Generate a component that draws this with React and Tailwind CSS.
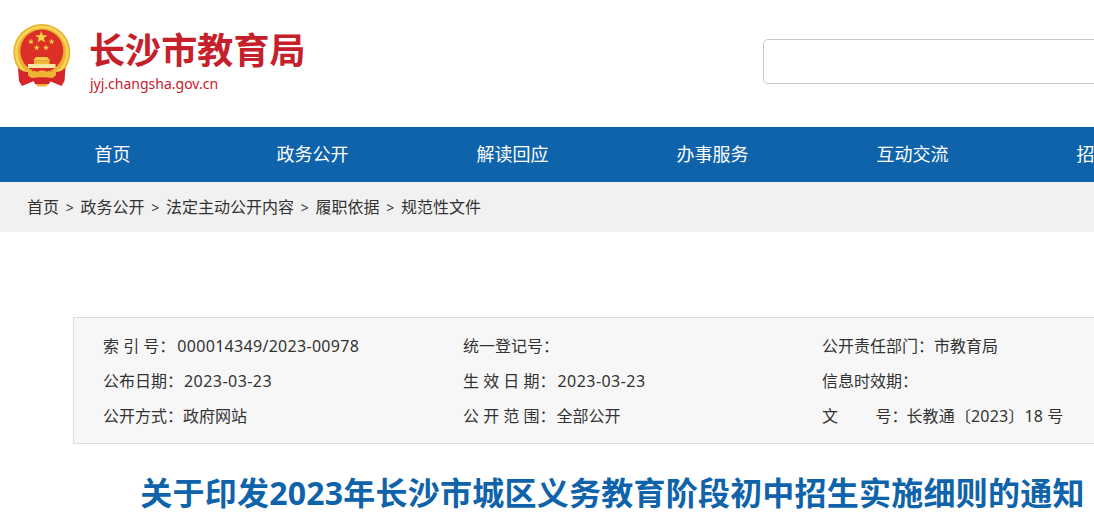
import React from "react";

const FONT = "font-['Noto_Sans','Noto_Sans_CJK_SC',sans-serif]";

const navItems = ["首页", "政务公开", "解读回应", "办事服务", "互动交流", "招商引资"];
const crumbs = ["首页", "政务公开", "法定主动公开内容", "履职依据", "规范性文件"];

const Star = ({ cx, cy, r }) => {
  const pts = [];
  for (let i = 0; i < 10; i++) {
    const rad = i % 2 === 0 ? r : r * 0.4;
    const a = (Math.PI / 5) * i - Math.PI / 2;
    pts.push(`${cx + rad * Math.cos(a)},${cy + rad * Math.sin(a)}`);
  }
  return <polygon points={pts.join(" ")} fill="#f5d34a" />;
};

// national emblem, simplified
const Emblem = () => (
  <svg width="60" height="66" viewBox="0 0 60 66" className="shrink-0">
    <circle cx="29.8" cy="29.5" r="28.5" fill="#edb230" />
    <circle cx="29.8" cy="29.5" r="25.5" fill="none" stroke="#f7d65c" strokeWidth="2.5" />
    <circle cx="29.8" cy="28" r="21.5" fill="#dc3027" />
    <Star cx={29.3} cy={14.3} r={6.5} />
    <Star cx={19} cy={18.7} r={3.2} />
    <Star cx={39.7} cy={18.7} r={3.2} />
    <Star cx={24.7} cy={24.7} r={3.2} />
    <Star cx={34} cy={24.7} r={3.2} />
    <path d="M21 37.5 L24 34 L35 34 L38.5 37.5 Z" fill="#f4c94c" />
    <rect x="22" y="37.5" width="15.5" height="3.5" fill="#efb83a" />
    <rect x="16" y="41" width="27.5" height="4" fill="#fae7a6" />
    <path d="M6 45 C12 50 18 50 22 47 L22 58 L10 63 L7 58 Z" fill="#d6262b" />
    <path d="M53.5 45 C47.5 50 41.5 50 37.5 47 L37.5 58 L49.5 63 L52.5 58 Z" fill="#d6262b" />
    <path d="M16 45 C19 50 22 47 25 49 C28 47 32 47 35 49 C38 47 41 50 44 45 L44 52 C40 57 36 55 30 55 C24 55 20 57 16 52 Z" fill="#eeb534" />
    <path d="M20 55 C24 54 36 54 40 55 L37 61 L23 61 Z" fill="#d6262b" />
    <path d="M23 61 L37 61 L34 63.5 L26 63.5 Z" fill="#eeb534" />
  </svg>
);

const Field = ({ label, value, className = "" }) => (
  <div className="h-[35px] leading-[35px] whitespace-pre">
    {label}
    <span className={className}>{value}</span>
  </div>
);

export default function App() {
  return (
    <div className={`h-[526px] w-full overflow-hidden bg-white text-[#333] ${FONT}`}>
      <div className="w-[1240px]">
        {/* HEADER */}
        <div className="flex h-[127px] items-start">
          <div className="ml-[12px] mt-[23px]">
            <Emblem />
          </div>
          <div className="ml-[17px] mt-[28px] w-[300px]">
            <div className="text-[36px] leading-[46px] font-bold text-[#c6202b] tracking-[0.1px]">长沙市教育局</div>
            <div className="ml-[1px] text-[14px] leading-[20px] text-[#c6202b]">jyj.changsha.gov.cn</div>
          </div>
          <div className="ml-[374px] mt-[39px] h-[45px] w-[400px] rounded-[5px] border border-[#c9c9c9]"></div>
        </div>

        {/* NAV */}
        <div className="flex h-[55px] bg-[#0f63aa] pl-[12.5px] text-[18px] leading-[55px] text-white">
          {navItems.map((item) => (
            <div key={item} className="w-[200px] text-center">
              {item}
            </div>
          ))}
        </div>

        {/* BREADCRUMB */}
        <div className="flex h-[50px] items-center bg-[#f1f1f1] pl-[27px] text-[16px]">
          {crumbs.map((item, i) => (
            <React.Fragment key={item}>
              {i > 0 && <span className="w-[21.5px] text-center text-[14px]">&gt;</span>}
              <span>{item}</span>
            </React.Fragment>
          ))}
        </div>

        {/* INFO TABLE */}
        <div className="ml-[73px] mt-[85px] w-[1079px]">
          <div className="grid h-[127px] grid-cols-[360px_359px_1fr] border border-[#dddddd] bg-[#f7f7f7] pl-[29px] pt-[11px] text-[16px]">
            <div>
              <Field label="索 引 号：" value="000014349/2023-00978" className="ml-[2px] tracking-[0.3px]" />
              <Field label="公布日期：" value="2023-03-23" className="ml-[1px] tracking-[0.45px]" />
              <Field label="公开方式：" value="政府网站" />
            </div>
            <div>
              <Field label="统一登记号：" value="" />
              <Field label="生 效 日 期：" value="2023-03-23" className="ml-[2px] tracking-[0.45px]" />
              <Field label="公 开 范 围：" value="全部公开" className="ml-[1px]" />
            </div>
            <div>
              <Field label="公开责任部门：" value="市教育局" />
              <Field label="信息时效期：" value="" />
              <Field label="文         号：" value="长教通〔2023〕18 号" className="ml-[-1px] tracking-[0.15px]" />
            </div>
          </div>

          {/* TITLE */}
          <h1 className="mt-[24px] text-center text-[32px] leading-[50px] font-bold tracking-[0.23px] text-[#0f63aa]">
            关于印发2023年长沙市城区义务教育阶段初中招生实施细则的通知
          </h1>
        </div>
      </div>
    </div>
  );
}
